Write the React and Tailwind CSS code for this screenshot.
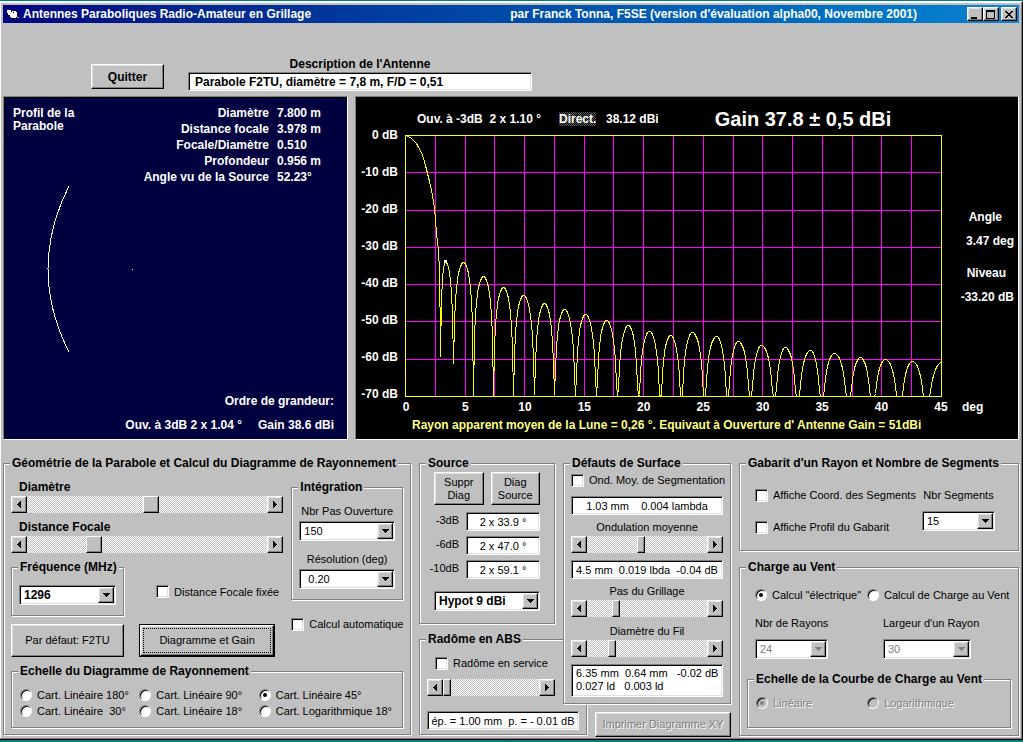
import { useId, useState } from "react";
import clsx from "clsx";

const raised =
  "bg-[#c0c0c0] border border-t-white border-l-white border-b-black border-r-black shadow-[inset_-1px_-1px_0_#808080,inset_1px_1px_0_#dfdfdf]";
const sunken =
  "bg-white border border-t-[#808080] border-l-[#808080] border-b-white border-r-white shadow-[inset_1px_1px_0_#000,inset_-1px_-1px_0_#dfdfdf]";
const embossed = "text-[#808080] [text-shadow:1px_1px_0_#fff]";

const DISH_DATA = [
  ["Diamètre", "7.800 m"],
  ["Distance focale", "3.978 m"],
  ["Focale/Diamètre", "0.510"],
  ["Profondeur", "0.956 m"],
  ["Angle vu de la Source", "52.23°"],
];

const LEVELS = [0, -10, -20, -30, -40, -50, -60, -70];
const ANGLES = [0, 5, 10, 15, 20, 25, 30, 35, 40, 45];

// Main lobe, in plot units (536 wide = 45 deg, 261 high = 70 dB)
const MAIN_LOBE = [
  [0, 0], [3, 1], [6, 3], [8, 5], [11, 8], [13, 12], [16, 17], [18, 23],
  [20, 30], [22, 38], [24, 46], [26, 55], [28, 66], [29, 72], [31, 98],
  [33, 115], [34, 135], [34, 163], [35, 180], [35, 221],
];

// Side lobes: [x of the peak, y of the peak, x of the null after it, y of that null]
const SIDE_LOBES = [
  [40, 126, 48, 228], [58, 127, 68, 261], [78, 141, 88, 261],
  [98, 152, 108, 261], [118, 160, 129, 259], [139, 168, 149, 259],
  [159, 174, 170, 261], [180, 179, 191, 261], [201, 185, 212, 261],
  [223, 190, 233, 261], [244, 196, 255, 261], [265, 200, 276, 261],
  [287, 197, 299, 261], [311, 201, 322, 261], [333, 206, 345, 261],
  [356, 210, 369, 261], [380, 212, 392, 261], [405, 215, 416, 261],
  [429, 218, 443, 261], [455, 222, 467, 261], [480, 224, 494, 261],
  [507, 226, 521, 261], [536, 227, 550, 261],
];

function buildPattern() {
  const points = [...MAIN_LOBE];
  let [start, startY] = [35, 221];

  SIDE_LOBES.forEach(([peak, top, end, endY]) => {
    for (let x = start + 1; x < end && x <= 536; x += 1) {
      const half = x < peak ? peak - start : end - peak;
      const drop =
        -20 * Math.log10(Math.cos((Math.PI / 2) * (Math.abs(x - peak) / half)));
      const floor = x < peak ? startY : endY;
      points.push([x, Math.min(top + drop * 3.73, floor)]);
    }
    if (end <= 536) {
      points.push([end, endY]);
    }
    start = end;
    startY = endY;
  });

  return points.map(([x, y]) => `${x},${Math.round(y)}`).join(" ");
}

const PATTERN = buildPattern();

function Button({ className, ...props }) {
  return (
    <button
      type="button"
      className={clsx("flex items-center justify-center text-center", raised, className)}
      {...props}
    />
  );
}

function Group({ title, className, bodyClass, children }) {
  return (
    <fieldset
      className={clsx(
        "min-w-0 border border-[#808080] bg-[#c0c0c0] shadow-[1px_1px_0_#fff,inset_1px_1px_0_#fff]",
        className
      )}
    >
      <legend className="ml-1.5 whitespace-nowrap bg-[#c0c0c0] px-0.5 text-xs leading-4 font-bold">
        {title}
      </legend>
      <div className={bodyClass}>{children}</div>
    </fieldset>
  );
}

function Arrow({ direction }) {
  const shapes = {
    left: "M4 0v7L0 3.5z",
    right: "M0 0v7l4-3.5z",
  };

  return (
    <svg width="4" height="7" viewBox="0 0 4 7" shapeRendering="crispEdges">
      <path d={shapes[direction]} />
    </svg>
  );
}

function Scroll({ label, initial, wide }) {
  const [value, setValue] = useState(initial);

  return (
    <div className="flex h-[17px]">
      <Button
        className="w-4 shrink-0"
        aria-label={`${label} -`}
        onClick={() => setValue((v) => Math.max(0, v - 10))}
      >
        <Arrow direction="left" />
      </Button>
      <input
        type="range"
        min="0"
        max="1000"
        aria-label={label}
        value={value}
        onChange={(e) => setValue(Number(e.target.value))}
        className={clsx(
          "h-full min-w-0 flex-1 appearance-none bg-[repeating-conic-gradient(#fff_0_25%,#c0c0c0_0_50%)] bg-[length:2px_2px] [&::-webkit-slider-thumb]:h-[17px] [&::-webkit-slider-thumb]:appearance-none [&::-webkit-slider-thumb]:border [&::-webkit-slider-thumb]:border-t-white [&::-webkit-slider-thumb]:border-r-black [&::-webkit-slider-thumb]:border-b-black [&::-webkit-slider-thumb]:border-l-white [&::-webkit-slider-thumb]:bg-[#c0c0c0] [&::-webkit-slider-thumb]:shadow-[inset_-1px_-1px_0_#808080]",
          wide
            ? "[&::-webkit-slider-thumb]:w-4"
            : "[&::-webkit-slider-thumb]:w-2"
        )}
      />
      <Button
        className="w-4 shrink-0"
        aria-label={`${label} +`}
        onClick={() => setValue((v) => Math.min(1000, v + 10))}
      >
        <Arrow direction="right" />
      </Button>
    </div>
  );
}

function Combo({ id, label, options, disabled, className, selectClass }) {
  return (
    <div className={clsx("relative h-5", className)}>
      <select
        id={id}
        aria-label={label}
        disabled={disabled}
        className={clsx(
          "block size-full appearance-none pr-5 leading-4 disabled:text-[#808080] disabled:opacity-100",
          sunken,
          selectClass
        )}
      >
        {options.map((option) => (
          <option key={option}>{option}</option>
        ))}
      </select>
      <span
        className={clsx(
          "pointer-events-none absolute top-0.5 right-0.5 bottom-0.5 flex w-4 items-center justify-center",
          raised
        )}
      >
        <svg width="7" height="4" viewBox="0 0 7 4" shapeRendering="crispEdges">
          <path d="M0 0h7L3.5 4z" fill={disabled ? "#808080" : "#000"} />
        </svg>
      </span>
    </div>
  );
}

function Check({ label, className }) {
  return (
    <label className={clsx("flex items-center gap-[5px] leading-4 whitespace-nowrap", className)}>
      <input
        type="checkbox"
        className={clsx(
          "grid size-[13px] shrink-0 appearance-none place-content-center before:size-[5px] checked:before:bg-black",
          sunken
        )}
      />
      {label}
    </label>
  );
}

function Radio({ label, name, defaultChecked, disabled }) {
  return (
    <label
      className={clsx(
        "flex items-center gap-[5px] leading-4 whitespace-pre",
        disabled && embossed
      )}
    >
      <input
        type="radio"
        name={name}
        defaultChecked={defaultChecked}
        disabled={disabled}
        className="grid size-3 shrink-0 appearance-none place-content-center rounded-full border border-t-[#808080] border-r-white border-b-white border-l-[#808080] bg-white shadow-[inset_1px_1px_0_#000] before:size-1 before:rounded-full checked:before:bg-black disabled:bg-[#c0c0c0] disabled:checked:before:bg-[#808080]"
      />
      {label}
    </label>
  );
}

function Field({ className, ...props }) {
  return (
    <input
      type="text"
      readOnly
      className={clsx("block h-[19px] w-full min-w-0 px-0.5 text-center leading-4", sunken, className)}
      {...props}
    />
  );
}

function TitleBar() {
  return (
    <header className="flex h-[18px] items-center bg-linear-to-r from-[#000080] to-[#1084d0] pr-0.5 pl-1 text-xs font-bold text-white">
      <svg width="13" height="12" viewBox="0 0 13 12" shapeRendering="crispEdges">
        <path d="M0 2h4v1h5v1h1v5H9v1H4V9H3V7H1V5H0z" fill="#fff" />
        <path d="M4 3h1v1H4z M6 4h1v1H6z M1 7h2v1H1z M2 8h1v1H2z M4 10h8v1H4z M10 5h1v4h-1z" fill="#000" />
        <path d="M10 9h2v1h-2z" fill="#c0c0c0" />
      </svg>
      <h1 className="ml-[3px] whitespace-nowrap">Antennes Paraboliques Radio-Amateur en Grillage</h1>
      <span className="mr-[50px] ml-auto whitespace-nowrap">
        par Franck Tonna, F5SE (version d'évaluation alpha00, Novembre 2001)
      </span>
      <div className="flex">
        <Button className="h-3.5 w-4" aria-label="Réduire">
          <svg width="10" height="9" viewBox="0 0 10 9" shapeRendering="crispEdges">
            <path d="M1 7h6v2H1z" />
          </svg>
        </Button>
        <Button className="h-3.5 w-4" aria-label="Agrandir">
          <svg width="10" height="9" viewBox="0 0 10 9" shapeRendering="crispEdges">
            <path d="M0 0h9v9H0zM1 2v6h7V2z" fillRule="evenodd" />
          </svg>
        </Button>
        <Button className="ml-0.5 h-3.5 w-4" aria-label="Fermer">
          <svg width="8" height="7" viewBox="0 0 8 7" shapeRendering="crispEdges">
            <path d="M0 0h2v1h1v1h2V1h1V0h2v1H7v1H6v1H5v1h1v1h1v1h1v1H6V6H5V5H3v1H2v1H0V6h1V5h1V4h1V3H2V2H1V1H0z" />
          </svg>
        </Button>
      </div>
    </header>
  );
}

function ProfilePanel() {
  return (
    <section className="flex flex-col border border-t-[#808080] border-r-white border-b-white border-l-[#808080] bg-[#000040] text-xs font-bold text-white shadow-[inset_1px_1px_0_#000]">
      <div className="flex justify-between pt-2 pr-5 pl-[9px]">
        <h2 className="pt-0.5 leading-[13px]">
          Profil de la
          <br />
          Parabole
        </h2>
        <dl className="grid grid-cols-[auto_50px] gap-x-2 leading-4">
          {DISH_DATA.map(([name, value]) => (
            <div key={name} className="contents">
              <dt className="text-right">{name}</dt>
              <dd className="whitespace-nowrap">{value}</dd>
            </div>
          ))}
        </dl>
      </div>
      <svg className="h-[168px] w-36" viewBox="0 0 144 168" shapeRendering="crispEdges">
        <path d="M65 1Q23 84 65 167" fill="none" stroke="#fff" />
        <path d="M128 84h1v1h-1z" fill="#fff" />
      </svg>
      <div className="mt-auto flex flex-col items-end gap-2 pr-[13px] pb-1.5 leading-4">
        <p>Ordre de grandeur:</p>
        <p className="flex gap-4">
          <span>Ouv. à 3dB 2 x 1.04 °</span>
          <span>Gain 38.6 dBi</span>
        </p>
      </div>
    </section>
  );
}

function Plot() {
  const columns = Array.from({ length: 17 }, (_, i) => Math.round(((i + 1) * 536) / 18));
  const rows = Array.from({ length: 6 }, (_, i) => Math.round(((i + 1) * 261) / 7));

  return (
    <svg
      className="block h-[262px] w-full"
      viewBox="0 0 537 262"
      preserveAspectRatio="none"
      shapeRendering="crispEdges"
      fill="none"
    >
      <g fill="#f0f">
        {columns.map((x) => (
          <rect key={x} x={x} y="0" width="1" height="262" />
        ))}
        {rows.map((y) => (
          <rect key={y} x="0" y={y} width="537" height="1" />
        ))}
      </g>
      <rect x="0.5" y="0.5" width="536" height="261" stroke="#ff0" />
      <polyline points={PATTERN} stroke="#ff0" transform="translate(0.5 0.5)" />
      <path d="M39 125h3v3h-3z" fill="#fff" />
    </svg>
  );
}

function PatternPanel() {
  return (
    <section className="border border-t-[#808080] border-r-white border-b-white border-l-[#808080] bg-black text-xs font-bold text-white">
      <div className="flex h-[30px] items-end pl-[61px] leading-4 whitespace-pre">
        <span className="w-[142px]">Ouv. à -3dB  2 x 1.10 °</span>
        <span className="w-[47px]">
          <span className="bg-[repeating-conic-gradient(#000_0_25%,#555_0_50%)] bg-[length:2px_2px]">
            Direct.
          </span>
        </span>
        <span>38.12 dBi</span>
        <strong className="ml-14 text-xl leading-4">Gain 37.8 ± 0,5 dBi</strong>
      </div>
      <div className="flex">
        <ol className="flex h-[275px] w-[42px] flex-col justify-between text-right leading-4">
          {LEVELS.map((level) => (
            <li key={level} className="whitespace-nowrap">{level} dB</li>
          ))}
        </ol>
        <div className="min-w-0 flex-1 pt-2 pl-[7px]">
          <Plot />
          <ol className="mx-px mt-0.5 flex justify-between leading-4">
            {ANGLES.map((angle) => (
              <li key={angle} className="flex w-0 justify-center">{angle}</li>
            ))}
          </ol>
        </div>
        <div className="flex w-[76px] flex-col items-end pr-1 leading-4">
          <dl className="mt-[82px] flex flex-col text-right">
            <dt className="pr-3">Angle</dt>
            <dd className="mt-2 whitespace-nowrap">3.47 deg</dd>
            <dt className="mt-4 pr-2">Niveau</dt>
            <dd className="mt-2 whitespace-nowrap">-33.20 dB</dd>
          </dl>
          <span className="mt-auto mr-auto ml-5">deg</span>
        </div>
      </div>
      <p className="mt-0.5 pb-1.5 pl-14 leading-4 whitespace-nowrap text-[#ffff80]">
        Rayon apparent moyen de la Lune = 0,26 °. Equivaut à Ouverture d' Antenne Gain = 51dBi
      </p>
    </section>
  );
}

function GeometryGroup() {
  const id = useId();

  return (
    <Group title="Géométrie de la Parabole et Calcul du Diagramme de Rayonnement" bodyClass="px-[7px] pb-1.5">
      <div className="flex gap-2 pt-2">
        <div className="min-w-0 flex-[273]">
          <p className="pl-2 text-xs leading-4 font-bold">Diamètre</p>
          <div className="mt-px">
            <Scroll label="Diamètre" initial={515} wide />
          </div>
          <p className="mt-1.5 pl-2 text-xs leading-4 font-bold">Distance Focale</p>
          <div className="mt-px">
            <Scroll label="Distance Focale" initial={262} wide />
          </div>
          <div className="mt-1.5 flex">
            <Group title="Fréquence (MHz)" className="w-[113px]" bodyClass="px-[7px] pt-2.5 pb-2.5">
              <Combo
                label="Fréquence (MHz)"
                options={["1296", "2320", "5760"]}
                selectClass="pl-1 text-xs font-bold"
              />
            </Group>
            <Check label="Distance Focale fixée" className="ml-8 pt-2" />
          </div>
          <div className="mt-2 flex gap-[15px] pr-2">
            <Button className="h-[33px] flex-[113]">Par défaut: F2TU</Button>
            <button type="button" className="h-[33px] flex-[137] border border-black">
              <span className={clsx("flex size-full p-0.5", raised)}>
                <span className="flex flex-1 items-center justify-center border border-dotted border-black">
                  Diagramme et Gain
                </span>
              </span>
            </button>
          </div>
        </div>
        <div className="min-w-0 flex-[112]">
          <Group title="Intégration" bodyClass="px-[7px] pb-2.5">
            <label htmlFor={`${id}-pas`} className="block pt-2 text-center leading-4 whitespace-nowrap">
              Nbr Pas Ouverture
            </label>
            <Combo id={`${id}-pas`} options={["150", "200"]} className="mt-0.5" selectClass="pl-1" />
            <label htmlFor={`${id}-res`} className="mt-2.5 block text-center leading-4">
              Résolution (deg)
            </label>
            <Combo id={`${id}-res`} options={["0.20", "0.10"]} className="mt-0.5" selectClass="pl-2" />
          </Group>
          <Check label="Calcul automatique" className="mt-4" />
        </div>
      </div>
      <Group title="Echelle du Diagramme de Rayonnement" className="mt-1.5" bodyClass="px-2 pt-2 pb-2">
        <div className="grid grid-cols-[120fr_120fr_136fr]">
          <Radio name="echelle" label="Cart. Linéaire 180°" />
          <Radio name="echelle" label="Cart. Linéaire 90°" />
          <Radio name="echelle" label="Cart. Linéaire 45°" defaultChecked />
          <Radio name="echelle" label="Cart. Linéaire  30°" />
          <Radio name="echelle" label="Cart. Linéaire 18°" />
          <Radio name="echelle" label="Cart. Logarithmique 18°" />
        </div>
      </Group>
    </Group>
  );
}

function SourceGroup() {
  const id = useId();
  const beams = [
    ["-3dB", "2 x 33.9 °"],
    ["-6dB", "2 x 47.0 °"],
    ["-10dB", "2 x 59.1 °"],
  ];

  return (
    <Group title="Source" className="mr-8" bodyClass="px-3.5 pb-3">
      <div className="flex gap-[7px] pt-px">
        <Button className="h-[33px] flex-1 leading-[13px]">
          Suppr
          <br />
          Diag
        </Button>
        <Button className="h-[33px] flex-1 leading-[13px]">
          Diag
          <br />
          Source
        </Button>
      </div>
      <div className="mt-[7px] flex flex-col gap-[5px]">
        {beams.map(([name, value]) => (
          <div key={name} className="flex gap-[7px]">
            <label htmlFor={id + name} className="-ml-4 w-[41px] shrink-0 text-right leading-4">
              {name}
            </label>
            <Field id={id + name} defaultValue={value} />
          </div>
        ))}
      </div>
      <Combo
        label="Source"
        options={["Hypot 9 dBi", "Dipôle"]}
        className="mt-3"
        selectClass="pl-1 text-xs font-bold"
      />
    </Group>
  );
}

function SurfaceGroup() {
  return (
    <Group title="Défauts de Surface" bodyClass="px-[7px] pb-1.5">
      <Check label="Ond. Moy. de Segmentation" className="pt-px" />
      <Field aria-label="Ondulation de segmentation" defaultValue="1.03 mm    0.004 lambda" className="mt-2" />
      <p className="mt-1 text-center leading-4">Ondulation moyenne</p>
      <div className="mt-px">
        <Scroll label="Ondulation moyenne" initial={450} />
      </div>
      <Field aria-label="Perte par ondulation" defaultValue="4.5 mm  0.019 lbda  -0.04 dB" className="mt-[7px]" />
      <p className="mt-1 text-center leading-4">Pas du Grillage</p>
      <div className="mt-px">
        <Scroll label="Pas du Grillage" initial={220} />
      </div>
      <p className="mt-1.5 text-center leading-4">Diamètre du Fil</p>
      <div className="mt-px">
        <Scroll label="Diamètre du Fil" initial={186} />
      </div>
      <textarea
        readOnly
        rows={2}
        aria-label="Perte du grillage"
        defaultValue={"6.35 mm  0.64 mm   -0.02 dB\n0.027 ld   0.003 ld"}
        className={clsx("mt-[7px] block h-[33px] w-full resize-none overflow-hidden px-1 pt-0.5 leading-[13px] whitespace-pre", sunken)}
      />
    </Group>
  );
}

function TemplateGroup() {
  const id = useId();

  return (
    <Group title="Gabarit d'un Rayon et Nombre de Segments" bodyClass="px-[15px] pt-4 pb-[15px]">
      <div className="flex justify-between pr-2">
        <div className="flex flex-col gap-4">
          <Check label="Affiche Coord. des Segments" />
          <Check label="Affiche Profil du Gabarit" />
        </div>
        <div className="w-[73px]">
          <label htmlFor={id} className="block text-center leading-4 whitespace-nowrap">
            Nbr Segments
          </label>
          <Combo id={id} options={["15", "20"]} className="mt-2" selectClass="pl-1" />
        </div>
      </div>
    </Group>
  );
}

function WindGroup() {
  const id = useId();

  return (
    <Group title="Charge au Vent" className="mt-2" bodyClass="px-[7px] pb-[7px]">
      <div className="grid grid-cols-[112fr_144fr] pt-3 pl-2">
        <Radio name="calcul" label={'Calcul "électrique"'} defaultChecked />
        <Radio name="calcul" label="Calcul de Charge au Vent" />
      </div>
      <div className="mt-3 grid grid-cols-[128fr_128fr] pl-2">
        <div>
          <label htmlFor={`${id}-n`} className="block leading-4">Nbr de Rayons</label>
          <Combo id={`${id}-n`} options={["24"]} disabled className="mt-2 w-[73px]" selectClass="pl-1" />
        </div>
        <div>
          <label htmlFor={`${id}-l`} className="block leading-4">Largeur d'un Rayon</label>
          <Combo id={`${id}-l`} options={["30"]} disabled className="mt-2 w-[88px]" selectClass="pl-1" />
        </div>
      </div>
      <Group title="Echelle de la Courbe de Charge au Vent" className="mt-3" bodyClass="pt-2 pb-4 pl-2">
        <div className="grid grid-cols-[112fr_144fr]">
          <Radio name="courbe" label="Linéaire" defaultChecked disabled />
          <Radio name="courbe" label="Logarithmique" disabled />
        </div>
      </Group>
    </Group>
  );
}

export default function App() {
  return (
    <div className="min-h-screen bg-[#008080] pt-px pb-0.5 font-['Liberation_Sans',Arial,sans-serif] text-[11px] text-black">
      <main className="border-t border-r border-b border-t-white border-r-black border-b-black bg-[#c0c0c0] pt-[3px] pr-[3px] pb-0.5 pl-[3px] shadow-[inset_-1px_-1px_0_#808080,inset_1px_1px_0_#fff]">
        <TitleBar />
        <div className="flex h-[73px] items-end pb-[5px] pl-[88px]">
          <Button className="mb-0.5 h-[25px] w-[73px] text-xs font-bold">Quitter</Button>
          <div className="ml-6 w-[344px]">
            <label htmlFor="description" className="block text-center text-xs leading-4 font-bold">
              Description de l'Antenne
            </label>
            <input
              id="description"
              type="text"
              defaultValue="Parabole F2TU, diamètre = 7,8 m, F/D = 0,51"
              className={clsx("block h-[19px] w-full px-1.5 text-xs font-bold", sunken)}
            />
          </div>
        </div>
        <div className="grid grid-cols-[345fr_664fr] gap-[7px]">
          <ProfilePanel />
          <PatternPanel />
        </div>
        <div className="mt-[15px] grid grid-cols-[408fr_312fr_280fr] items-start gap-2">
          <GeometryGroup />
          <div className="flex min-w-0 items-start">
            <div className="min-w-0 flex-[168]">
              <SourceGroup />
              <Group title="Radôme en ABS" className="mt-[7px]" bodyClass="px-[7px] pb-1">
                <Check label="Radôme en service" className="pt-2 pl-2" />
                <div className="mt-2 mr-6">
                  <Scroll label="Epaisseur du radôme" initial={0} />
                </div>
                <Field aria-label="Perte du radôme" defaultValue="ép. = 1.00 mm  p. = - 0.01 dB" className="mt-[15px]" />
              </Group>
            </div>
            <div className="z-10 -ml-6 flex min-w-0 flex-[168] flex-col">
              <SurfaceGroup />
              <Button disabled className={clsx("mt-2 ml-8 h-[25px]", embossed)}>
                Imprimer Diagramme XY
              </Button>
            </div>
          </div>
          <div className="min-w-0">
            <TemplateGroup />
            <WindGroup />
          </div>
        </div>
      </main>
    </div>
  );
}
